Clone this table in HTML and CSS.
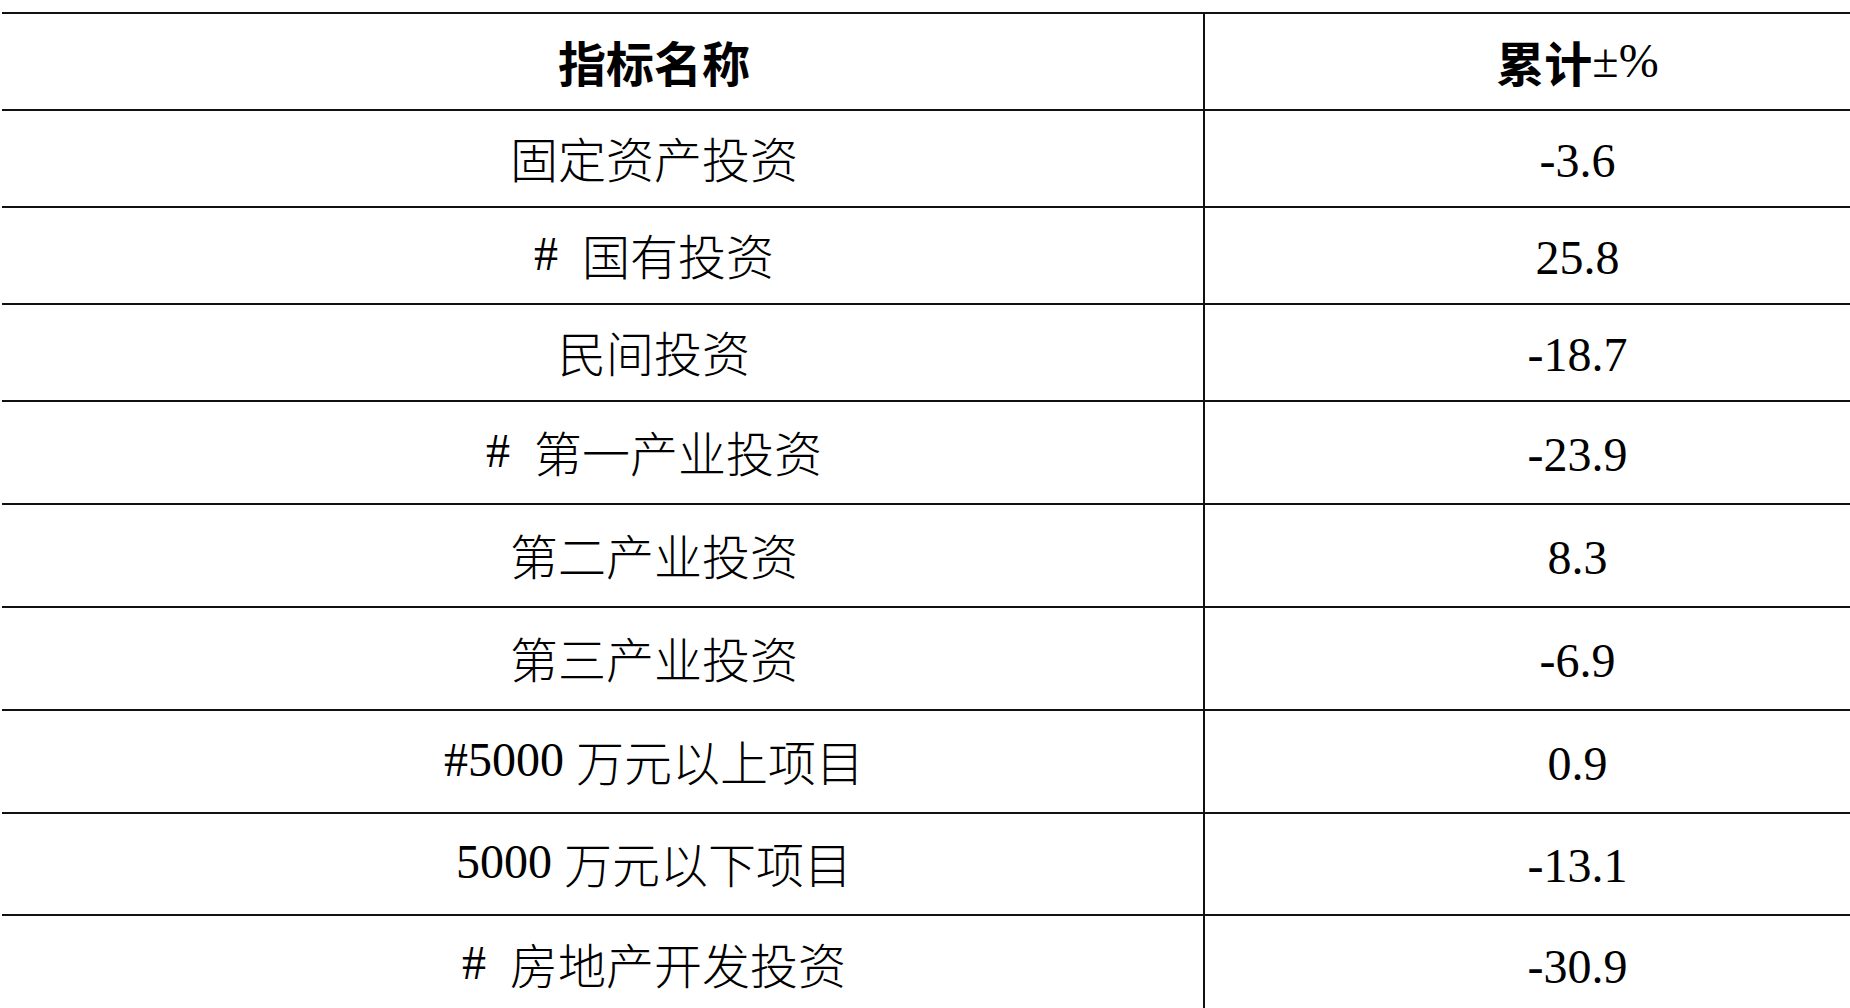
FILE: index.html
```html
<!DOCTYPE html>
<html lang="zh-CN">
<head>
<meta charset="utf-8">
<title>指标</title>
<link rel="stylesheet" href="styles.css">
</head>
<body>
<div class="table">
  <div class="row head">
    <div class="c1"><span class="bold">指标名称</span></div>
    <div class="c2"><span class="bold">累计</span><span class="lat">±%</span></div>
  </div>
  <div class="row">
    <div class="c1">固定资产投资</div>
    <div class="c2 num">-3.6</div>
  </div>
  <div class="row">
    <div class="c1"><span class="lat">#&nbsp; </span>国有投资</div>
    <div class="c2 num">25.8</div>
  </div>
  <div class="row">
    <div class="c1">民间投资</div>
    <div class="c2 num">-18.7</div>
  </div>
  <div class="row tall">
    <div class="c1"><span class="lat">#&nbsp; </span>第一产业投资</div>
    <div class="c2 num">-23.9</div>
  </div>
  <div class="row tall">
    <div class="c1">第二产业投资</div>
    <div class="c2 num">8.3</div>
  </div>
  <div class="row tall">
    <div class="c1">第三产业投资</div>
    <div class="c2 num">-6.9</div>
  </div>
  <div class="row tall">
    <div class="c1"><span class="lat">#5000 </span>万元以上项目</div>
    <div class="c2 num">0.9</div>
  </div>
  <div class="row tall2">
    <div class="c1"><span class="lat">5000 </span>万元以下项目</div>
    <div class="c2 num">-13.1</div>
  </div>
  <div class="row last">
    <div class="c1"><span class="lat">#&nbsp; </span>房地产开发投资</div>
    <div class="c2 num">-30.9</div>
  </div>
</div>
</body>
</html>
```
FILE: styles.css
```css
html, body {
  margin: 0;
  padding: 0;
  background: #fff;
  overflow: hidden;
}
body {
  width: 1850px;
  height: 1008px;
  color: #000;
  font-family: "Noto Sans CJK SC", sans-serif;
  font-weight: 300;
  font-size: 48px;
}
.table {
  margin-top: 12px;
  margin-left: 2px;
  width: 1848px;
}
.row {
  display: flex;
  box-sizing: border-box;
  height: 97px;
  border-top: 2px solid #111;
}
.row.tall { height: 103px; }
.row.tall2 { height: 102px; }
.row.last { height: 100px; }
.c1, .c2 {
  display: flex;
  align-items: center;
  justify-content: center;
  line-height: 1;
  white-space: pre;
  box-sizing: border-box;
}
.c1 {
  width: 1203px;
  border-right: 2px solid #111;
  padding-left: 103px;
  padding-bottom: 4px;
}
.c2 {
  flex: 1;
  padding-left: 100px;
}
.head .c1, .head .c2 {
  padding-top: 0;
  padding-bottom: 2px;
}
.num {
  font-family: "Liberation Serif", serif;
  font-weight: 400;
  padding-top: 4px;
}
.bold {
  font-family: "Noto Sans CJK SC", sans-serif;
  font-weight: 700;
}
.lat {
  font-family: "Liberation Serif", serif;
  font-weight: 400;
}
```
